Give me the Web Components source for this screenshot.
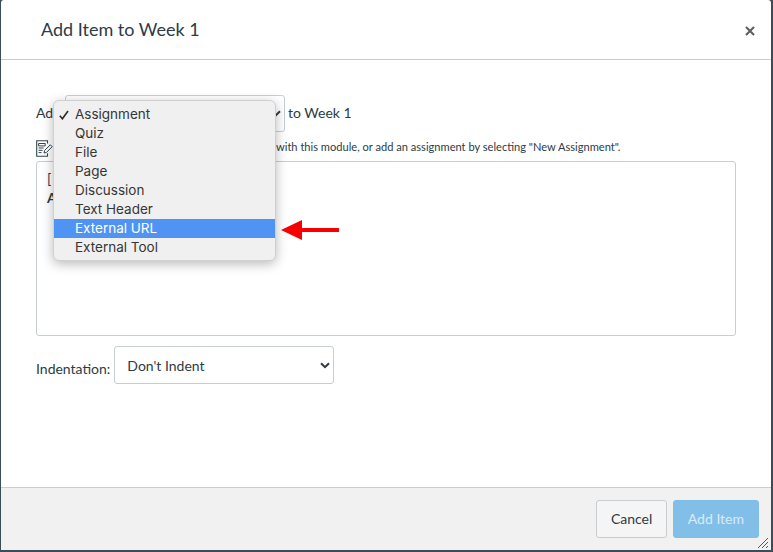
<!DOCTYPE html>
<html>
<head>
<meta charset="utf-8">
<title>Add Item to Week 1</title>
<style>
  html, body { margin: 0; height: 100%; background: #3b4d5a; overflow: hidden; }
  body { font-family: Lato, "Liberation Sans", sans-serif; }
</style>
</head>
<body>
<modal-dialog heading="Add Item to Week 1">
  <add-row>
    <span slot="before">Ad</span>
    <fake-select slot="select" style="width:220px"></fake-select>
    <span slot="after">to Week 1</span>
  </add-row>
  <hint-row>with this module, or add an assignment by selecting "New Assignment".</hint-row>
  <list-box></list-box>
  <indent-row></indent-row>
  <native-menu slot="overlay"></native-menu>
  <red-arrow slot="overlay"></red-arrow>
  <modal-button slot="footer">Cancel</modal-button>
  <modal-button slot="footer" primary>Add Item</modal-button>
</modal-dialog>

<script>
class ModalDialog extends HTMLElement {
  constructor() {
    super();
    this.attachShadow({ mode: 'open' });
    this.shadowRoot.innerHTML = `
      <style>
        :host { display: flex; flex-direction: column; height: 550px; margin: 0 2px 0 1px; background: #fff; color: #2d3b45; position: relative; border-radius: 3px 3px 0 0; }
        header { box-sizing: border-box; border-bottom: 1px solid #c7cdd1; display: flex; align-items: center; justify-content: space-between; padding: 0 16px 0 40px; flex: none; height: 60px; }
        h1 { margin: 0 0 2px; font-size: 18px; font-weight: 400; color: #2d3b45; }
        header svg { margin-top: 2px; }
        .body { flex: 1; padding: 35px 35px 0; box-sizing: border-box; }
        footer { height: 63px; flex: none; box-sizing: border-box; background: #f1f1f1; border-top: 1px solid #c7cdd1; display: flex; justify-content: flex-end; align-items: center; gap: 6px; padding: 0 12px 0 0; position: relative; }
        .grip { position: absolute; right: 2px; bottom: 1px; }
      </style>
      <header>
        <h1></h1>
        <svg width="10" height="10" viewBox="0 0 10 10"><path d="M1 1 9 9M9 1 1 9" stroke="#5a5f64" stroke-width="2.1"/></svg>
      </header>
      <div class="body"><slot></slot></div>
      <footer>
        <slot name="footer"></slot>
        <svg class="grip" width="12" height="12" viewBox="0 0 12 12"><path d="M1 11 11 1M5 11 11 5M9 11 11 9" stroke="#555" stroke-width="1" fill="none"/></svg>
      </footer>
      <slot name="overlay"></slot>
    `;
    this.shadowRoot.querySelector('h1').textContent = this.getAttribute('heading');
  }
}

class AddRow extends HTMLElement {
  constructor() {
    super();
    this.attachShadow({ mode: 'open' });
    this.shadowRoot.innerHTML = `
      <style>
        :host { display: flex; align-items: center; font-size: 14px; color: #2d3b45; height: 37px; margin-bottom: 8px; }
        ::slotted(span) { padding-bottom: 2px; }
        ::slotted([slot="before"]) { width: 29px; }
        ::slotted([slot="after"]) { margin-left: 3px; }
      </style>
      <slot name="before"></slot><slot name="select"></slot><slot name="after"></slot>
    `;
  }
}

class FakeSelect extends HTMLElement {
  constructor() {
    super();
    this.attachShadow({ mode: 'open' });
    this.shadowRoot.innerHTML = `
      <style>
        :host { display: flex; align-items: center; justify-content: space-between; box-sizing: border-box; height: 100%; background: #fff; border: 1px solid #c7cdd1; border-radius: 3px; padding: 0 3px 0 12px; font-size: 14px; color: #2d3b45; }
        svg { flex: none; }
      </style>
      <span><slot></slot></span>
      <svg width="10" height="7" viewBox="0 0 10 7"><path d="M1 1.2 5 5.2 9 1.2" stroke="#33393e" stroke-width="2" fill="none"/></svg>
    `;
  }
}

class HintRow extends HTMLElement {
  constructor() {
    super();
    this.attachShadow({ mode: 'open' });
    this.shadowRoot.innerHTML = `
      <style>
        :host { display: flex; align-items: center; gap: 223px; height: 17px; font-size: 11.1px; color: #2d3b45; white-space: nowrap; margin-bottom: 4px; }
        span { padding-bottom: 5px; }
      </style>
      <svg width="17" height="17" viewBox="0 0 17 17" style="flex:none">
        <path d="M11.5 3.5V.8H.7v15.4h10.8v-3" fill="none" stroke="#33454f" stroke-width="1.1"/>
        <path d="M2.6 3.5h6.6v2.4H2.6zM2.6 8h5M2.6 10.3h4M2.6 12.6h3" fill="none" stroke="#33454f" stroke-width="1"/>
        <path d="M8 13 8.6 10.4 14.3 4.8 16.2 6.7 10.5 12.4z" fill="#fff" stroke="#33454f" stroke-width="1"/>
      </svg>
      <span><slot></slot></span>
    `;
  }
}

class ListBox extends HTMLElement {
  constructor() {
    super();
    this.attachShadow({ mode: 'open' });
    this.shadowRoot.innerHTML = `
      <style>
        :host { display: block; box-sizing: border-box; width: 700px; height: 175px; background: #fff; border: 1px solid #c7cdd1; border-radius: 3px; padding: 7px 10px; font-size: 14px; line-height: 19px; color: #2d3b45; margin-bottom: 10px; }
        b { display: block; }
      </style>
      <div>[</div>
      <b>A</b>
    `;
  }
}

class IndentRow extends HTMLElement {
  constructor() {
    super();
    this.attachShadow({ mode: 'open' });
    this.shadowRoot.innerHTML = `
      <style>
        :host { display: flex; align-items: center; gap: 4px; height: 38px; font-size: 14px; color: #2d3b45; }
        span { padding-top: 6px; }
        fake-select { width: 220px; }
      </style>
      <span>Indentation:</span>
      <fake-select>Don't Indent</fake-select>
    `;
  }
}

class NativeMenu extends HTMLElement {
  constructor() {
    super();
    this.attachShadow({ mode: 'open' });
    const items = ['Assignment', 'Quiz', 'File', 'Page', 'Discussion', 'Text Header', 'External URL', 'External Tool'];
    this.shadowRoot.innerHTML = `
      <style>
        :host { position: absolute; left: 52px; top: 100px; width: 223px; box-sizing: border-box; padding: 4px 0 3px; background: #f0f0f0; border: 1px solid #d0d0d0; border-radius: 6px; box-shadow: 0 3px 12px rgba(0,0,0,.28); font-family: Inter, "Liberation Sans", sans-serif; font-size: 13.5px; color: #363636; display: block; }
        div { height: 19px; line-height: 19px; padding-left: 21px; position: relative; white-space: nowrap; }
        .on { background: #4f94f3; color: #fff; }
        svg { position: absolute; left: 5px; top: 5px; }
      </style>
    `;
    items.forEach((name, i) => {
      const row = document.createElement('div');
      row.textContent = name;
      if (name === 'External URL') row.className = 'on';
      if (i === 0) row.insertAdjacentHTML('afterbegin', '<svg width="10" height="10" viewBox="0 0 10 10"><path d="M.8 5.8 3.4 8.8 9 1" stroke="#2b2b2b" stroke-width="1.6" fill="none"/></svg>');
      this.shadowRoot.appendChild(row);
    });
  }
}

class RedArrow extends HTMLElement {
  constructor() {
    super();
    this.attachShadow({ mode: 'open' });
    this.shadowRoot.innerHTML = `
      <style>:host { position: absolute; left: 280px; top: 220px; display: block; line-height: 0; }</style>
      <svg width="59" height="20" viewBox="0 0 59 20"><path d="M0 10 21 0V8H58V12H21V20Z" fill="#f80000"/></svg>
    `;
  }
}

class ModalButton extends HTMLElement {
  constructor() {
    super();
    this.attachShadow({ mode: 'open' });
    this.shadowRoot.innerHTML = `
      <style>
        :host { display: flex; align-items: center; justify-content: center; box-sizing: border-box; height: 38px; padding: 0 13.5px 2px; font-size: 14px; border-radius: 3px; background: #f5f5f5; border: 1px solid #c7cdd1; color: #2d3b45; }
        :host([primary]) { background: #82bfe8; border-color: #7fbce6; color: #d7ebf8; padding: 0 14px 2px; }
      </style>
      <slot></slot>
    `;
  }
}

customElements.define('fake-select', FakeSelect);
customElements.define('modal-dialog', ModalDialog);
customElements.define('add-row', AddRow);
customElements.define('hint-row', HintRow);
customElements.define('list-box', ListBox);
customElements.define('indent-row', IndentRow);
customElements.define('native-menu', NativeMenu);
customElements.define('red-arrow', RedArrow);
customElements.define('modal-button', ModalButton);
</script>
</body>
</html>
